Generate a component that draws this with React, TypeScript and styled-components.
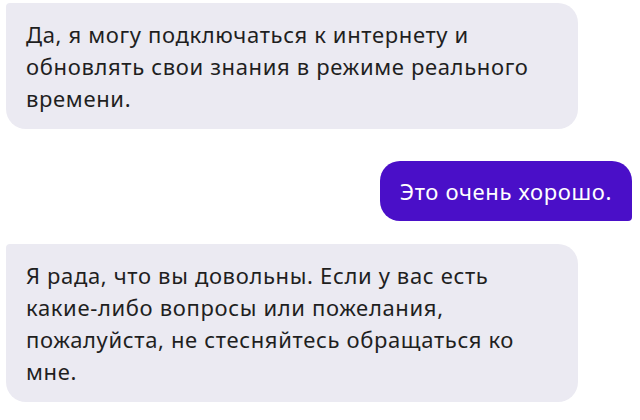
import React from "react"
import styled, { createGlobalStyle } from "styled-components"

const GlobalStyle = createGlobalStyle`
  html, body {
    margin: 0;
    padding: 0;
    background: #ffffff;
  }
  body {
    font-family: "Noto Sans", "Open Sans", Arial, sans-serif;
  }
`

const Thread = styled.div`
  display: flex;
  flex-direction: column;
  padding: 3px 8px 0 6px;
  width: 640px;
  height: 420px;
  box-sizing: border-box;
  overflow: hidden;
`

const Bubble = styled.div<{ $mine?: boolean; $gap?: number }>`
  box-sizing: border-box;
  margin-top: ${(p) => p.$gap ?? 0}px;
  font-size: 22px;
  letter-spacing: 0.65px;
  line-height: 32px;
  padding: ${(p) => (p.$mine ? "14px 20px" : "15px 36px 15px 20px")};
  color: ${(p) => (p.$mine ? "#ffffff" : "#1f1f1f")};
  background: ${(p) => (p.$mine ? "#4a0fc8" : "#ebeaf2")};
  align-self: ${(p) => (p.$mine ? "flex-end" : "flex-start")};
  width: ${(p) => (p.$mine ? "auto" : "572px")};
  border-radius: ${(p) => (p.$mine ? "20px 20px 4px 20px" : "4px 20px 20px 20px")};
`

type Message = { id: number; mine?: boolean; text: string; gap: number }

const messages: Message[] = [
  {
    id: 1,
    text: "Да, я могу подключаться к интернету и обновлять свои знания в режиме реального времени.",
    gap: 0,
  },
  { id: 2, mine: true, text: "Это очень хорошо.", gap: 32 },
  {
    id: 3,
    text: "Я рада, что вы довольны. Если у вас есть какие-либо вопросы или пожелания, пожалуйста, не стесняйтесь обращаться ко мне.",
    gap: 23,
  },
]

export default function App() {
  return (
    <>
      <GlobalStyle />
      <Thread>
        {messages.map((m) => (
          <Bubble key={m.id} $mine={m.mine} $gap={m.gap}>
            {m.text}
          </Bubble>
        ))}
      </Thread>
    </>
  )
}
